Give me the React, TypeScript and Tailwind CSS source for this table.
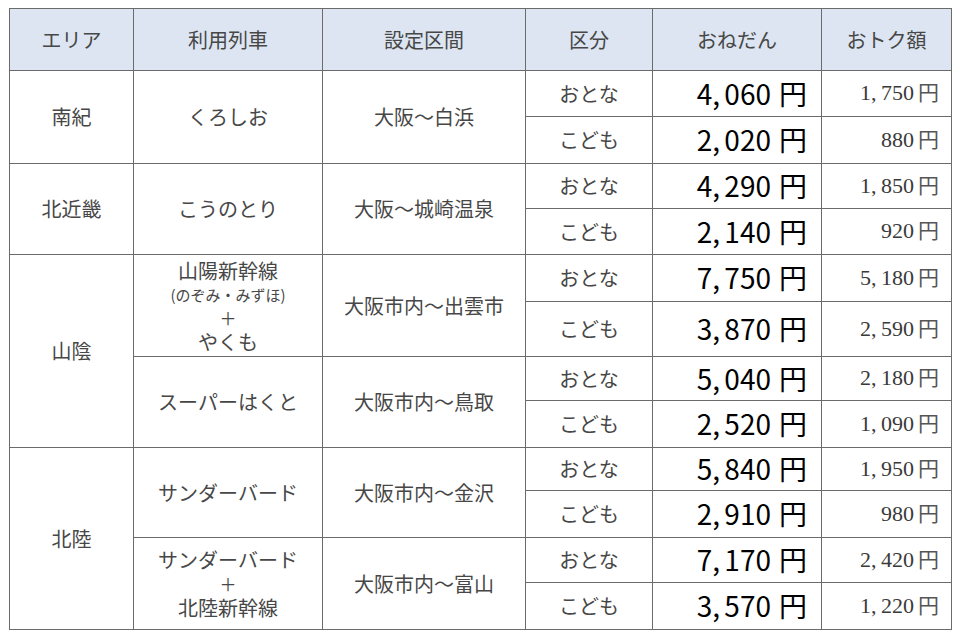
import type { ReactNode } from 'react';

type FareRow = { kind: string; price: string; save: string; h: number };
type Route = { train: ReactNode; section: string; rows: FareRow[] };
type Area = { name: string; routes: Route[] };

const AREAS: Area[] = [
  {
    name: '南紀',
    routes: [
      {
        train: 'くろしお',
        section: '大阪～白浜',
        rows: [
          { kind: 'おとな', price: '4,060', save: '1,750', h: 46 },
          { kind: 'こども', price: '2,020', save: '880', h: 47 },
        ],
      },
    ],
  },
  {
    name: '北近畿',
    routes: [
      {
        train: 'こうのとり',
        section: '大阪～城崎温泉',
        rows: [
          { kind: 'おとな', price: '4,290', save: '1,850', h: 45 },
          { kind: 'こども', price: '2,140', save: '920', h: 46 },
        ],
      },
    ],
  },
  {
    name: '山陰',
    routes: [
      {
        train: (
          <div className="flex flex-col items-center">
            <span className="leading-[26px]">山陽新幹線</span>
            <span className="text-[15px] leading-[22px]">(のぞみ・みずほ)</span>
            <span className="text-[17px] leading-[24px]">＋</span>
            <span className="leading-[24px]">やくも</span>
          </div>
        ),
        section: '大阪市内～出雲市',
        rows: [
          { kind: 'おとな', price: '7,750', save: '5,180', h: 47 },
          { kind: 'こども', price: '3,870', save: '2,590', h: 55 },
        ],
      },
      {
        train: 'スーパーはくと',
        section: '大阪市内～鳥取',
        rows: [
          { kind: 'おとな', price: '5,040', save: '2,180', h: 44 },
          { kind: 'こども', price: '2,520', save: '1,090', h: 47 },
        ],
      },
    ],
  },
  {
    name: '北陸',
    routes: [
      {
        train: 'サンダーバード',
        section: '大阪市内～金沢',
        rows: [
          { kind: 'おとな', price: '5,840', save: '1,950', h: 43 },
          { kind: 'こども', price: '2,910', save: '980', h: 47 },
        ],
      },
      {
        train: (
          <div className="flex flex-col items-center">
            <span className="leading-[25px]">サンダーバード</span>
            <span className="text-[17px] leading-[23px]">＋</span>
            <span className="leading-[25px]">北陸新幹線</span>
          </div>
        ),
        section: '大阪市内～富山',
        rows: [
          { kind: 'おとな', price: '7,170', save: '2,420', h: 45 },
          { kind: 'こども', price: '3,570', save: '1,220', h: 47 },
        ],
      },
    ],
  },
];

const HEADERS = ['エリア', '利用列車', '設定区間', '区分', 'おねだん', 'おトク額'];
const COL_WIDTHS = [124, 189, 203, 127, 169, 130];

// half-width comma like the original Japanese fonts
function Amount({ value, comma }: { value: string; comma: string }) {
  const parts = value.split(',');
  return (
    <>
      {parts.map((p, i) => (
        <span key={i}>
          {i > 0 && <span className={comma}>,</span>}
          {p}
        </span>
      ))}
    </>
  );
}

const cell = 'border border-[#6b6b6b] text-center align-middle p-0';

export default function App() {
  return (
    <div className="min-h-screen bg-white pt-[8px] pl-[9px] font-['Noto_Sans_CJK_JP',sans-serif]">
      <table className="table-fixed border-collapse w-[943px] text-[#474747] text-[20px]">
        <colgroup>
          {COL_WIDTHS.map((w, i) => (
            <col key={i} style={{ width: w }} />
          ))}
        </colgroup>
        <thead>
          <tr className="h-[62px] bg-[#dce5f1]">
            {HEADERS.map((h) => (
              <th key={h} className={`${cell} font-normal text-[20px]`}>
                {h}
              </th>
            ))}
          </tr>
        </thead>
        <tbody>
          {AREAS.map((area) => {
            const areaSpan = area.routes.reduce((n, r) => n + r.rows.length, 0);
            return area.routes.map((route, ri) =>
              route.rows.map((row, i) => (
                <tr key={`${area.name}-${ri}-${i}`} style={{ height: row.h }}>
                  {ri === 0 && i === 0 && (
                    <td rowSpan={areaSpan} className={cell}>
                      {area.name}
                    </td>
                  )}
                  {i === 0 && (
                    <>
                      <td rowSpan={route.rows.length} className={cell}>
                        {route.train}
                      </td>
                      <td rowSpan={route.rows.length} className={cell}>
                        {route.section}
                      </td>
                    </>
                  )}
                  <td className={cell}>{row.kind}</td>
                  <td className={`${cell} text-right pr-[14px] text-[28px] text-black leading-none`}>
                    <span className="relative -top-[1px]">
                      <Amount value={row.price} comma="inline-block w-[12px] text-left" />
                      <span className="ml-[8px]">円</span>
                    </span>
                  </td>
                  <td className={`${cell} text-right pr-[12px] text-[22px] leading-none font-['Liberation_Serif','Noto_Sans_CJK_JP',serif] text-[#3a3a3a]`}>
                    <span className="relative -top-[1px]">
                      <Amount value={row.save} comma="inline-block w-[10px] text-left" />
                      <span className="ml-[4px] font-['Noto_Sans_CJK_JP',sans-serif] text-[21px] text-[#555]">円</span>
                    </span>
                  </td>
                </tr>
              )),
            );
          })}
        </tbody>
      </table>
    </div>
  );
}
